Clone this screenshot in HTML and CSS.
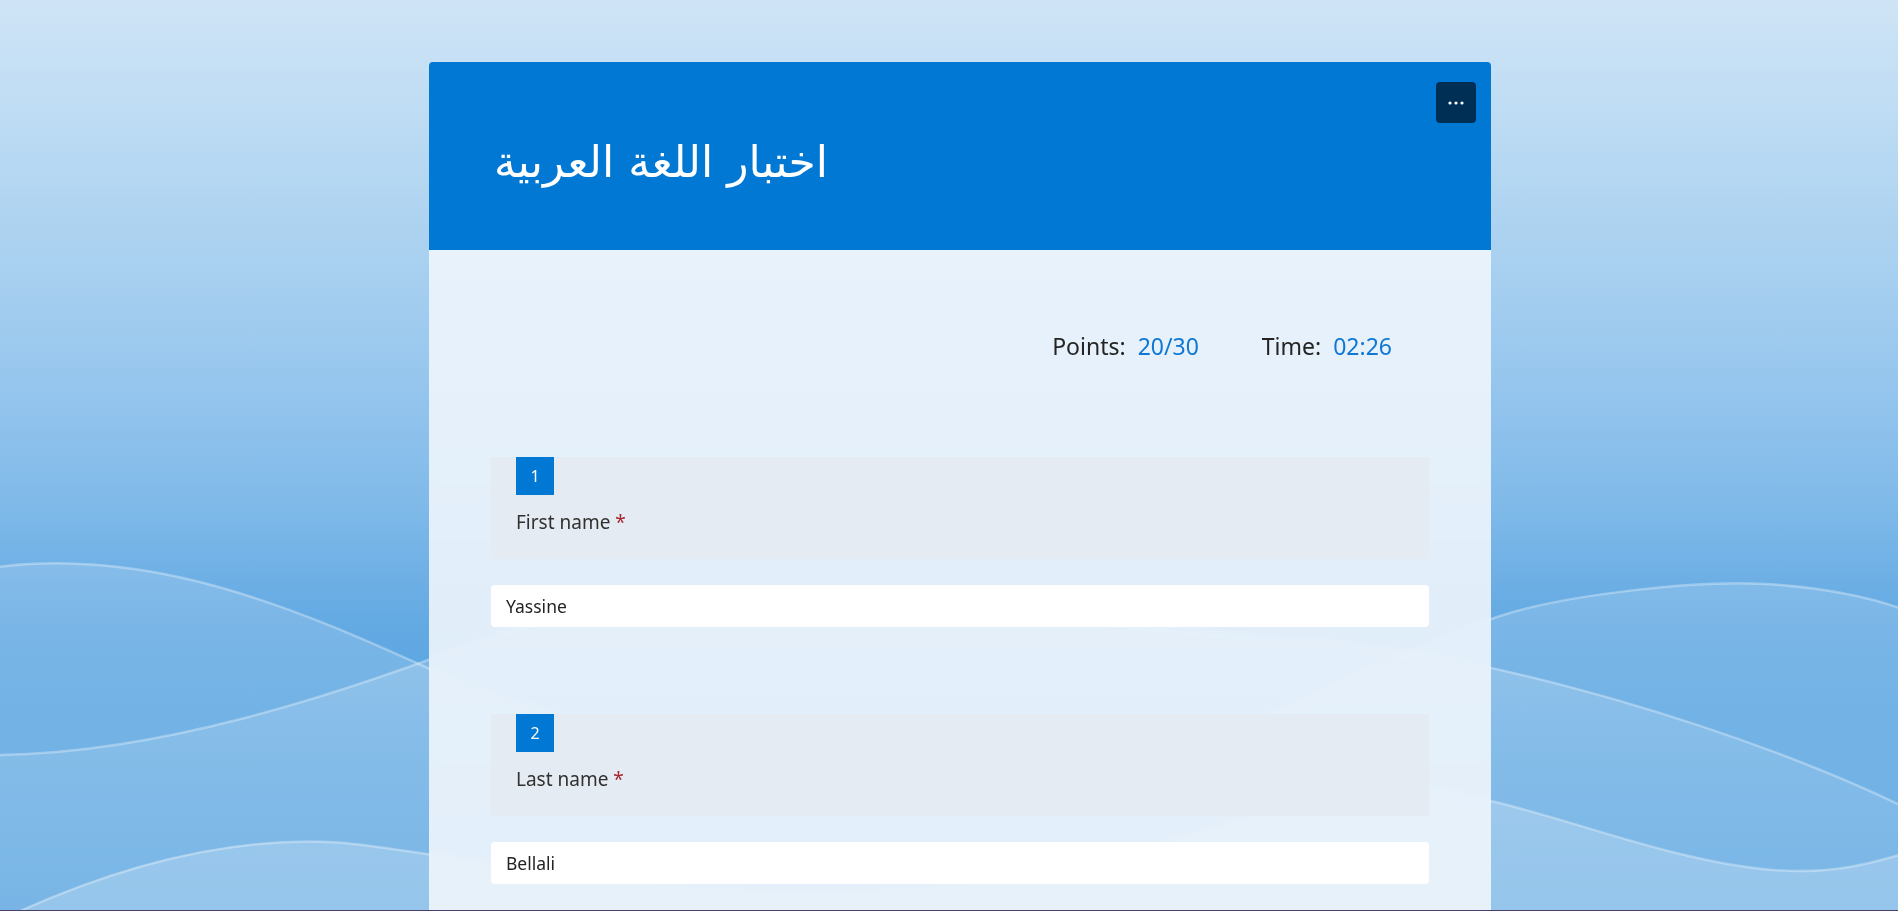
FILE: index.html
```html
<!DOCTYPE html>
<html lang="en">
<head>
<meta charset="utf-8">
<title>اختبار اللغة العربية</title>
<link rel="stylesheet" href="styles.css">
</head>
<body>
<svg class="backdrop" viewBox="0 0 1898 911" preserveAspectRatio="none" aria-hidden="true">
  <defs>
    <linearGradient id="base" x1="0" y1="0" x2="0" y2="911" gradientUnits="userSpaceOnUse">
      <stop offset="0" stop-color="#cfe4f6"/>
      <stop offset="0.11" stop-color="#c0ddf4"/>
      <stop offset="0.22" stop-color="#b1d5f1"/>
      <stop offset="0.33" stop-color="#a3cdef"/>
      <stop offset="0.44" stop-color="#93c4ed"/>
      <stop offset="0.55" stop-color="#80bae9"/>
      <stop offset="0.615" stop-color="#72b2e6"/>
      <stop offset="0.68" stop-color="#64aae3"/>
      <stop offset="0.78" stop-color="#5aa5e1"/>
      <stop offset="1" stop-color="#5aa5e1"/>
    </linearGradient>
    <linearGradient id="gq" x1="0" y1="600" x2="0" y2="911" gradientUnits="userSpaceOnUse">
      <stop offset="0" stop-color="#ffffff" stop-opacity="0.22"/>
      <stop offset="1" stop-color="#ffffff" stop-opacity="0.04"/>
    </linearGradient>
  </defs>
  <rect x="0" y="0" width="1898" height="911" fill="url(#base)"/>
  <path fill="#ffffff" fill-opacity="0.15" d="M-10,568 C150,545 300,610 430,669 C600,750 900,800 1150,760 C1250,735 1400,650 1500,616 C1560,596 1700,578 1780,585 C1840,590 1880,600 1910,612 L1910,920 L-10,920 Z"/>
  <path fill="url(#gq)" d="M-10,755 C150,755 330,700 513,628 C700,565 1100,625 1300,640 C1480,648 1760,735 1910,810 L1910,920 L-10,920 Z"/>
  <path fill="#ffffff" fill-opacity="0.22" d="M-10,925 C120,862 230,838 330,842 C430,846 700,920 1000,880 C1200,850 1300,785 1420,790 C1520,795 1650,860 1773,870 C1840,875 1880,860 1910,852 L1910,920 L-10,920 Z"/>
  <g fill="none" stroke="#ffffff" stroke-opacity="0.32" stroke-width="2.5">
    <path d="M-10,568 C150,545 300,610 430,669 C600,750 900,800 1150,760 C1250,735 1400,650 1500,616 C1560,596 1700,578 1780,585 C1840,590 1880,600 1910,612"/>
    <path d="M-10,755 C150,755 330,700 513,628 C700,565 1100,625 1300,640 C1480,648 1760,735 1910,810"/>
    <path d="M-10,925 C120,862 230,838 330,842 C430,846 700,920 1000,880 C1200,850 1300,785 1420,790 C1520,795 1650,860 1773,870 C1840,875 1880,860 1910,852"/>
  </g>
</svg>

<main class="card">
  <header class="card-head">
    <h1 class="title" dir="rtl" lang="ar">اختبار اللغة العربية</h1>
    <button class="more" type="button" aria-label="More options">
      <svg width="16" height="4" viewBox="0 0 16 4" aria-hidden="true">
        <circle cx="2" cy="2" r="1.6" fill="#ffffff"/>
        <circle cx="8" cy="2" r="1.6" fill="#ffffff"/>
        <circle cx="14" cy="2" r="1.6" fill="#ffffff"/>
      </svg>
    </button>
  </header>

  <section class="card-body">
    <div class="stats">
      <div class="stat"><span class="stat-label">Points:</span><span class="stat-value">20/30</span></div>
      <div class="stat"><span class="stat-label">Time:</span><span class="stat-value">02:26</span></div>
    </div>

    <div class="question">
      <div class="q-head">
        <span class="badge">1</span>
        <div class="q-label">First name <span class="req">*</span></div>
      </div>
      <div class="answer">Yassine</div>
    </div>

    <div class="question">
      <div class="q-head">
        <span class="badge">2</span>
        <div class="q-label">Last name <span class="req">*</span></div>
      </div>
      <div class="answer">Bellali</div>
    </div>
  </section>
</main>

<div class="bottom-line"></div>
</body>
</html>
```

FILE: styles.css
```css
html, body {
  margin: 0;
  padding: 0;
  height: 100%;
  overflow: hidden;
}

body {
  font-family: "Segoe UI", "Noto Sans", "Open Sans", sans-serif;
  color: #323130;
  background: #5aa5e1;
}

.backdrop {
  position: fixed;
  left: 0;
  top: 0;
  width: 100%;
  height: 100%;
  z-index: 0;
  display: block;
}

.card {
  position: relative;
  z-index: 1;
  width: 1062px;
  margin: 62px 0 0 429px;
  border-radius: 4px 4px 0 0;
  overflow: hidden;
}

.card-head {
  height: 188px;
  box-sizing: border-box;
  background: #0078d4;
  display: flex;
  justify-content: space-between;
  align-items: flex-start;
  padding: 20px 15px 0 65px;
}

.title {
  margin: 0;
  align-self: center;
  font-family: "DejaVu Sans", "Noto Sans", sans-serif;
  font-weight: normal;
  font-size: 44px;
  line-height: 54px;
  color: #ffffff;
  position: relative;
  top: -4px;
}

.more {
  width: 40px;
  height: 41px;
  border: 0;
  border-radius: 4px;
  background: #002f56;
  padding: 0;
  display: flex;
  align-items: center;
  justify-content: center;
  cursor: pointer;
}

.more svg {
  display: block;
}

.card-body {
  background: rgba(238, 245, 252, 0.9);
  backdrop-filter: blur(3px);
  padding: 80px 62px 300px 62px;
}

.stats {
  display: flex;
  justify-content: flex-end;
  gap: 63px;
  padding-right: 37px;
  font-size: 23px;
  line-height: 32px;
  margin-bottom: 95px;
}

.stat {
  display: flex;
  gap: 12px;
}

.stat-label {
  color: #252423;
}

.stat-value {
  color: #0f78d4;
}

.question {
  margin-bottom: 87px;
}

.q-head {
  background: #e4ebf3;
  padding: 0 25px 23px 25px;
}

.badge {
  display: flex;
  width: 38px;
  height: 38px;
  align-items: center;
  justify-content: center;
  background: #0078d4;
  color: #ffffff;
  font-size: 16px;
  margin-bottom: 13px;
}

.q-label {
  font-size: 19px;
  line-height: 28px;
  color: #323130;
}

.req {
  color: #a4262c;
}

.answer {
  margin-top: 26px;
  height: 42px;
  box-sizing: border-box;
  background: #ffffff;
  border-radius: 4px;
  display: flex;
  align-items: center;
  padding: 0 15px;
  font-size: 17.5px;
  color: #252423;
}

.bottom-line {
  position: fixed;
  left: 0;
  right: 0;
  bottom: 0;
  height: 1px;
  background: #4a3f6b;
  z-index: 2;
}
```
